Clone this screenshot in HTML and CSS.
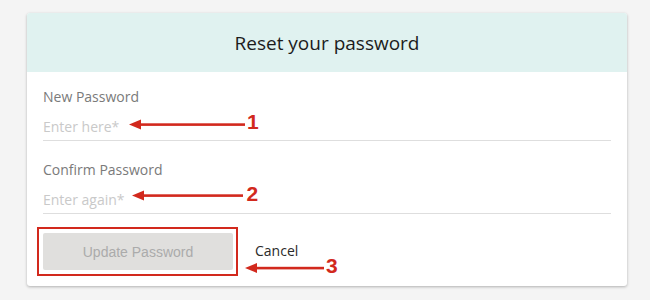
FILE: index.html
```html
<!DOCTYPE html>
<html>
<head>
<meta charset="utf-8">
<link rel="stylesheet" href="styles.css">
</head>
<body>
<div class="page">
  <div class="card">
    <div class="card-header">Reset your password</div>
    <div class="card-body">
      <div class="field">
        <label class="label">New Password</label>
        <input class="input" type="password" placeholder="Enter here*">
      </div>
      <div class="field">
        <label class="label">Confirm Password</label>
        <input class="input" type="password" placeholder="Enter again*">
      </div>
      <div class="actions">
        <div class="btn-wrap">
          <button class="btn-primary" disabled>Update Password</button>
          <span class="highlight"></span>
        </div>
        <button class="btn-link">Cancel</button>
      </div>
    </div>
  </div>
  <svg class="annotations" width="650" height="300" viewBox="0 0 650 300">
    <g fill="#d2291d" stroke="none">
      <polygon points="129,124.5 141,119.5 141,129.5"/>
      <rect x="140" y="123.3" width="105" height="2.6"/>
      <polygon points="132,195.5 144,190.5 144,200.5"/>
      <rect x="143" y="194.3" width="100" height="2.6"/>
      <polygon points="245,268 257,263 257,273"/>
      <rect x="256" y="266.8" width="68" height="2.6"/>
    </g>
    <g class="num">
      <text x="247" y="128.5">1</text>
      <text x="246.5" y="200.5">2</text>
      <text x="326" y="273">3</text>
    </g>
  </svg>
</div>
</body>
</html>
```

FILE: styles.css
```css
html, body {
  margin: 0;
  padding: 0;
  background: #f4f4f4;
}
.page {
  position: relative;
  width: 650px;
  height: 300px;
  padding: 13px 0 0 27px;
  box-sizing: border-box;
  font-family: "Open Sans", "Liberation Sans", sans-serif;
}
.card {
  width: 600px;
  background: #fff;
  border-radius: 3px;
  box-shadow: 0 1px 3px rgba(0, 0, 0, 0.28);
  overflow: hidden;
}
.card-header {
  height: 59px;
  background: #e0f2f0;
  display: flex;
  align-items: center;
  justify-content: center;
  font-size: 19px;
  color: #1c1c1c;
  padding-top: 1px;
  box-sizing: border-box;
}
.card-body {
  padding: 15px 16px 16px 16px;
}
.field {
  display: flex;
  flex-direction: column;
  margin-bottom: 19px;
}
.label {
  font-size: 14px;
  line-height: 19px;
  color: #7a7a7a;
}
.input {
  border: none;
  border-bottom: 1px solid #dedede;
  outline: none;
  padding: 11px 0 4px 0;
  margin: 0;
  font-family: "Open Sans", sans-serif;
  font-size: 14px;
  line-height: 19px;
  height: 35px;
  box-sizing: border-box;
  color: #333;
  background: transparent;
}
.input::placeholder {
  color: #c9c9c9;
}
.actions {
  display: flex;
  align-items: center;
  gap: 22px;
}
.btn-wrap {
  position: relative;
}
.btn-primary {
  display: block;
  width: 190px;
  height: 37px;
  border: none;
  border-radius: 2px;
  background: #e0dfdd;
  color: #ababab;
  font-family: "Liberation Sans", Arial, sans-serif;
  font-size: 14px;
  padding: 0;
}
.highlight {
  position: absolute;
  left: -6px;
  top: -6px;
  right: -5px;
  bottom: -6px;
  border: 2px solid #d2291d;
  pointer-events: none;
}
.btn-link {
  border: none;
  background: none;
  padding: 0;
  font-family: "Open Sans", sans-serif;
  font-size: 14px;
  color: #2a2a2a;
  margin-top: -3px;
}
.annotations {
  position: absolute;
  left: 0;
  top: 0;
  pointer-events: none;
}
.num text {
  font-family: "Liberation Sans", Arial, sans-serif;
  font-weight: bold;
  font-size: 21px;
  fill: #d2291d;
}
```
